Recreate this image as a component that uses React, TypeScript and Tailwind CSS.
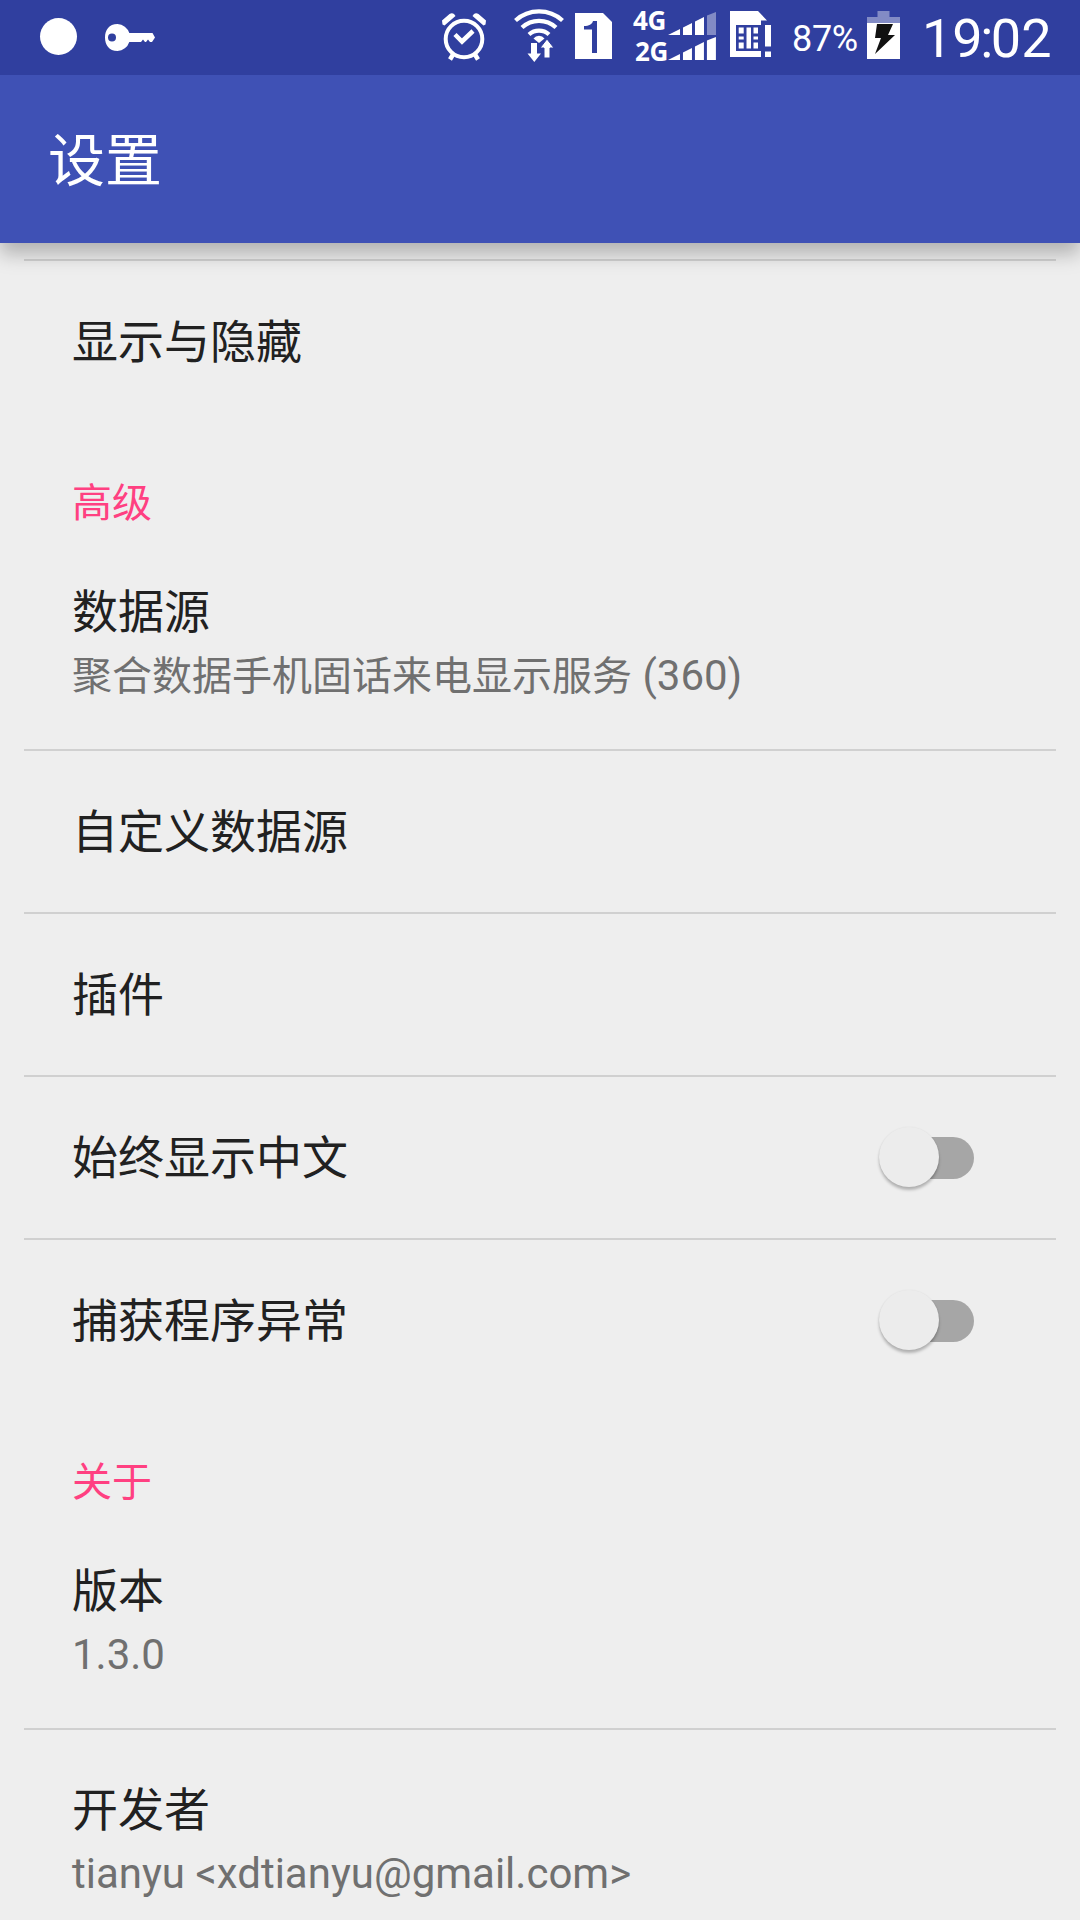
import clsx from "clsx";

type Item = {
  title: string;
  summary?: string;
  toggle?: boolean;
};

type Section = {
  header?: string;
  items: Item[];
};

const sections: Section[] = [
  { items: [{ title: "显示与隐藏" }] },
  {
    header: "高级",
    items: [
      { title: "数据源", summary: "聚合数据手机固话来电显示服务 (360)" },
      { title: "自定义数据源" },
      { title: "插件" },
      { title: "始终显示中文", toggle: true },
      { title: "捕获程序异常", toggle: true },
    ],
  },
  {
    header: "关于",
    items: [
      { title: "版本", summary: "1.3.0" },
      { title: "开发者", summary: "tianyu <xdtianyu@gmail.com>" },
    ],
  },
];

const KeyIcon = () => (
  <svg width="50" height="75" viewBox="105 0 50 75" fill="#fff">
    <path
      fillRule="evenodd"
      d="M117.500 24a13 13 0 0 1 11.800 9H152.500l2.500 4.500-3 4.500h-2l-2-2.500-2 2.500h-1l-2-2.500-2 2.500h-11.700a13 13 0 0 1-11.800 9C109 51 105 45 105 37.500S109 24 117.500 24zm-5.500 9.500a4 4 0 1 0 0 8 4 4 0 0 0 0-8z"
    />
  </svg>
);

const AlarmIcon = () => (
  <svg width="46" height="75" viewBox="441 0 46 75" fill="none" stroke="#fff">
    <circle cx="464" cy="39" r="18.300" strokeWidth="4" />
    <path d="M455 34.500l7 7 11-10.500" strokeWidth="4.500" />
    <path d="M453 54.500l-3 5M475 54.500l3 5" strokeWidth="4.500" />
    <path
      d="M442 20.500l7.500-6.500q2.500-1.500 4.500 0l1.500 2-11 9.500-2-1zM486 20.500l-7.500-6.500q-2.500-1.500-4.500 0l-1.500 2 11 9.500 2-1z"
      fill="#fff"
      stroke="none"
    />
  </svg>
);

const WifiIcon = () => (
  <svg width="50" height="75" viewBox="514 0 50 75" fill="none" stroke="#fff">
    <g strokeWidth="4.300">
      <path d="M515.500 20.500a35 35 0 0 1 47 0" />
      <path d="M522 27.500a25 25 0 0 1 34 0" />
      <path d="M529 34.500a15 15 0 0 1 20 0" />
    </g>
    <g fill="#fff" stroke="none">
      <path d="M533.500 38.500a7 7 0 0 1 11 0l-5.500 4.500z" />
      <path d="M531 43h6v10.500h4l-6.700 8.500-6.800-8.500h3.500z" />
      <path d="M544 58v-10h-4l7-9 7 9h-4v10z" stroke="#303f9f" strokeWidth="1" />
    </g>
  </svg>
);

const SimOneIcon = () => (
  <svg width="37" height="75" viewBox="575 0 37 75">
    <path d="M575 13h28l9 9v37h-37z" fill="#fff" />
    <path d="M592 53V29.500h-8V26c5 0 8-1.500 9-5h4v32z" fill="#303f9f" />
  </svg>
);

const SignalBars = ({ weak }: { weak?: boolean }) => (
  <svg width="48" height="23" viewBox="0 0 48 23" fill="#fff">
    <path d="M0 23L12 17v6zM15 23v-7.500l9-4.500v12zM27 23V9.500L36 5v18z" />
    <path d="M39 23V3.500L48 0v23z" opacity={weak ? 0.4 : 1} />
  </svg>
);

const SimAlertIcon = () => (
  <svg width="42" height="75" viewBox="730 0 42 75" fill="#fff">
    <path d="M730 11h28l9 9.500h-6V57h-31z" />
    <path d="M736 25h25v26h-25z" fill="#303f9f" />
    <path d="M738.700 27.500h5v6h-5zM738.700 36.500h5v3h-5zM738.700 42.500h5v6h-5zM746.500 27.500h4.500v21h-4.500zM753.500 27.500h4.500v6h-4.500zM753.500 36.500h4.500v3h-4.500zM753.500 42.500h4.500v6h-4.500z" />
    <path d="M765 25h6v21.500h-6zM765 51.500h6v5.500h-6z" />
  </svg>
);

const BatteryIcon = () => (
  <svg width="33" height="75" viewBox="867 0 33 75">
    <path d="M877.500 11h12v6H900v6h-33v-6h10.500z" fill="#fff" opacity="0.400" />
    <path d="M867 23h33v36h-33z" fill="#fff" />
    <path d="M877 24h16l-5 11h7l-20 19 6-16h-6z" fill="#111" />
  </svg>
);

const StatusBar = () => (
  <div className="flex h-[75px] items-center bg-[#303f9f] text-white">
    <div className="ml-[39.500px] mr-[28.500px] size-[37px] -translate-y-px rounded-full bg-white" />
    <KeyIcon />
    <div className="ml-auto flex items-center pr-[27px]">
      <AlarmIcon />
      <div className="w-[27px]" />
      <WifiIcon />
      <div className="w-[11px]" />
      <SimOneIcon />
      <div className="mb-[3px] ml-[21px] flex w-[83px] flex-col gap-0.5 font-['Open_Sans'] text-[26px] leading-[23px] font-bold tracking-[-0.3px]">
        <div className="flex h-[23px] items-start justify-between">
          <span className="-mt-[3px]">4G</span>
          <SignalBars weak />
        </div>
        <div className="flex h-[23px] items-start justify-between">
          <span className="mt-[3px] pl-0.5">2G</span>
          <SignalBars />
        </div>
      </div>
      <div className="w-[14px]" />
      <SimAlertIcon />
      <span className="mt-0.5 ml-5 w-[65px] text-[36px] leading-none tracking-[-0.3px]">87%</span>
      <div className="w-[10px]" />
      <BatteryIcon />
      <span className="mt-[3px] ml-[22px] w-[131px] text-[54px] leading-none">
        19<span className="-mx-[2.500px]">:</span>02
      </span>
    </div>
  </div>
);

const Toggle = () => (
  <div className="relative mr-[106px] h-[42px] w-[88px] rounded-full">
    <div className="absolute inset-y-0 right-0 left-[10px] rounded-full bg-[#a6a6a6]" />
    <div className="absolute -top-[9.500px] -left-[7.500px] size-[60px] rounded-full bg-[#ececec] shadow-[0_3px_3px_rgba(0,0,0,0.25),0_0_2px_rgba(0,0,0,0.06)]" />
  </div>
);

const Row = ({ item, last }: { item: Item; last: boolean }) => (
  <>
    <div
      className={clsx(
        "flex items-center justify-between pl-[72px]",
        item.summary ? "h-[217px]" : "h-[161px]"
      )}
    >
      <div className={clsx(item.summary && "h-[217px] pt-[48px]")}>
        <p className="text-[46px] leading-[64px] text-[#212121]">{item.title}</p>
        {item.summary && (
          <p className="text-[42px] leading-[63px] whitespace-nowrap text-[#707070]">
            {item.summary.split(/([\u4e00-\u9fff]+)/).map((part, i) => (
              <span key={i} className={clsx(i % 2 === 1 && "text-[40px]")}>
                {part}
              </span>
            ))}
          </p>
        )}
      </div>
      {item.toggle && <Toggle />}
    </div>
    {!last && <div className="mx-6 h-0.5 bg-[#d0d0d0]" />}
  </>
);

const App = () => {
  return (
    <main className="h-[1920px] w-[1080px] overflow-hidden bg-[#eeeeee] font-['Roboto','Noto_Sans_CJK_SC',sans-serif]">
      <header className="relative z-10 shadow-[0_11px_18px_rgba(0,0,0,0.25)]">
        <StatusBar />
        <div className="flex h-[168px] items-center bg-[#3f51b5] pt-[5px] pl-12">
          <h1 className="text-[57px] leading-[80px] text-white">设置</h1>
        </div>
      </header>
      <div className="pt-4">
        <div className="mx-6 h-0.5 bg-[#d0d0d0]" />
        {sections.map((section, s) => (
          <section key={s}>
            {section.header && (
              <h2 className="h-[110px] pt-[53px] pl-[72px] text-[40px] leading-[57px] text-[#ff4081]">
                {section.header}
              </h2>
            )}
            {section.items.map((item, i) => (
              <Row
                key={item.title}
                item={item}
                last={i === section.items.length - 1}
              />
            ))}
          </section>
        ))}
      </div>
    </main>
  );
};

export default App;
